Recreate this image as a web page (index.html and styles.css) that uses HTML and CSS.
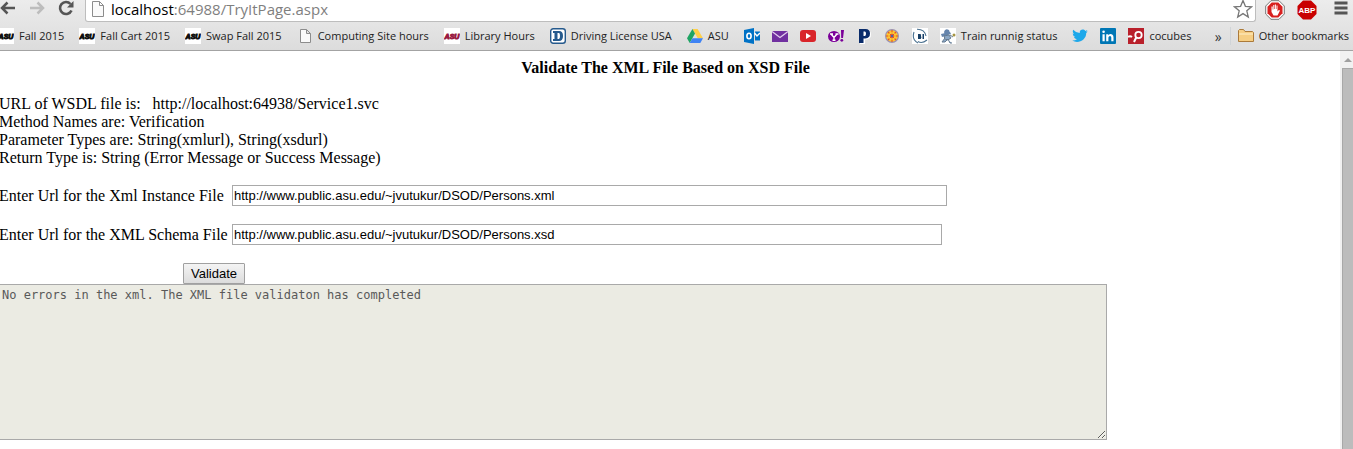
FILE: index.html
```
<!DOCTYPE html>
<html lang="en">
<head>
<meta charset="utf-8">
<title>TryItPage</title>
<link rel="stylesheet" href="styles.css">
</head>
<body>
<div class="browser">
<header class="chrome">
  <div class="toolbar">
    <nav class="nav">
      <button class="tool" aria-label="Back"><svg width="16" height="16" viewBox="0 0 16 16"><path d="M15 8H2M7.500 2.500 2 8l5.500 5.500" fill="none" stroke="#555" stroke-width="2.500"/></svg></button>
      <button class="tool" aria-label="Forward"><svg width="16" height="16" viewBox="0 0 16 16"><path d="M1 8h13M8.500 2.500 14 8l-5.500 5.500" fill="none" stroke="#bdbdbd" stroke-width="2.500"/></svg></button>
      <button class="tool" aria-label="Reload"><svg width="16" height="16" viewBox="0 0 16 16"><path d="M13.500 10.500A6 6 0 1 1 12.500 4" fill="none" stroke="#555" stroke-width="2.600"/><path d="M15.500 1v6.500H9z" fill="#555"/></svg></button>
    </nav>
    <div class="address">
      <svg class="page" width="12" height="16" viewBox="0 0 12 16"><path d="M.5.500h7l4 4v11H.5zM7.500.500v4h4" fill="#fafafa" stroke="#8c8c8c"/></svg>
      <p class="url">localhost<span class="path">:64988/TryItPage.aspx</span></p>
      <button class="tool star" aria-label="Bookmark this page"><svg width="20" height="20" viewBox="0 0 20 20"><path d="m10 1.500 2.400 5.800 6.100.500-4.700 4 1.500 6.200-5.300-3.400-5.300 3.400 1.500-6.200-4.700-4 6.100-.500z" fill="#fff" stroke="#777" stroke-width="1.300"/></svg></button>
    </div>
    <div class="extensions">
      <button class="tool" aria-label="Content blocker"><svg width="20" height="20" viewBox="0 0 20 20"><path d="M6 .700h8L19.300 6v8L14 19.300H6L.7 14V6z" fill="#fff" stroke="#777"/><path d="M6.700 2.500h6.600l4.200 4.200v6.600l-4.200 4.200H6.700l-4.200-4.200V6.700z" fill="#d8201f"/><path d="M6.500 6.500v5.500l2 3.500h4l2.500-5-1.200-.500-1.300 1.500V5.500h-1V9h-.600V4.500h-1V9h-.600V5h-1v4.500h-.600v-3z" fill="#fff"/></svg></button>
      <button class="tool" aria-label="Adblock Plus"><svg width="20" height="20" viewBox="0 0 20 20"><path d="M6 .500h8L19.500 6v8L14 19.500H6L.5 14V6z" fill="#c90000"/><text x="10" y="13" class="abp">ABP</text></svg></button>
      <button class="tool menu" aria-label="Menu"><svg width="14" height="14" viewBox="0 0 14 14"><path d="M.5 2h13M.5 7h13M.5 12h13" stroke="#555" stroke-width="3"/></svg></button>
    </div>
  </div>
  <nav class="bookmarks">
    <a href="#" class="mark"><svg width="16" height="16" viewBox="0 0 16 16"><path d="M0 0h16v16H0z" fill="#fff"/><text x="8" y="11" class="asu">ASU</text></svg><span class="name">Fall 2015</span></a>
    <a href="#" class="mark"><svg width="16" height="16" viewBox="0 0 16 16"><path d="M0 0h16v16H0z" fill="#fff"/><text x="8" y="11" class="asu">ASU</text></svg><span class="name">Fall Cart 2015</span></a>
    <a href="#" class="mark"><svg width="16" height="16" viewBox="0 0 16 16"><path d="M0 0h16v16H0z" fill="#fff"/><text x="8" y="11" class="asu">ASU</text></svg><span class="name">Swap Fall 2015</span></a>
    <a href="#" class="mark"><svg width="16" height="16" viewBox="0 0 16 16"><path d="M3.500 1.500h6l4 4v9h-10zM9.500 1.500v4h4" fill="#fafafa" stroke="#8c8c8c"/></svg><span class="name">Computing Site hours</span></a>
    <a href="#" class="mark"><svg width="16" height="16" viewBox="0 0 16 16"><path d="M0 0h16v16H0z" fill="#fff"/><text x="8" y="11" class="asu maroon">ASU</text></svg><span class="name">Library Hours</span></a>
    <a href="#" class="mark"><svg width="16" height="16" viewBox="0 0 16 16"><rect x=".7" y=".7" width="14.600" height="14.600" rx="2.500" fill="#fff" stroke="#265a8d" stroke-width="1.400"/><path d="M3 3h6q4 0 4 5t-4 5H3v-2h1.500V5H3zm4.500 2v6H9q1 0 1-3T9 5z" fill="#265a8d" fill-rule="evenodd"/></svg><span class="name">Driving License USA</span></a>
    <a href="#" class="mark"><svg width="16" height="16" viewBox="0 0 16 16"><path d="M5.400 1h5.200L16 10.200h-5.200z" fill="#ffcf48"/><path d="M5.400 1 0 10.200 2.700 15 8 5.600z" fill="#1fa463"/><path d="M5.500 10.200H16L13.300 15H2.700z" fill="#3f83f4"/></svg><span class="name">ASU</span></a>
    <a href="#" class="mark" aria-label="Outlook"><svg width="16" height="16" viewBox="0 0 16 16"><path d="M0 2 10 0v16L0 14z" fill="#0072c6"/><path d="M11 3.500h5v9h-5z" fill="#0072c6"/><path d="m10.500 5 2.500 3 3-3" fill="none" stroke="#fff" stroke-width="1.500"/><ellipse cx="5" cy="8" rx="2.100" ry="2.800" fill="none" stroke="#fff" stroke-width="1.600"/></svg></a>
    <a href="#" class="mark" aria-label="Mail"><svg width="16" height="16" viewBox="0 0 16 16"><path d="M0 3h16v11H0z" fill="#7030a0"/><path d="m0 3.500 8 6 8-6" fill="none" stroke="#e3cfee" stroke-width="1.200"/></svg></a>
    <a href="#" class="mark" aria-label="YouTube"><svg width="16" height="16" viewBox="0 0 16 16"><rect y="2" width="16" height="12" rx="3" fill="#d9252a"/><path d="m6 5 5 3-5 3z" fill="#fff"/></svg></a>
    <a href="#" class="mark" aria-label="Yahoo"><svg width="16" height="16" viewBox="0 0 16 16"><ellipse cx="6" cy="8.500" rx="6" ry="5.500" fill="#7b0099"/><path d="m3 6 3 3.500L9 6M6 9v3.500M4.500 12.300h3M2 6h3M7.500 6h3" fill="none" stroke="#fff" stroke-width="1.400"/><path d="M13 2h3l-1 8h-1.800z" fill="#7b0099"/><circle cx="13.800" cy="12.300" r="1.400" fill="#7b0099"/></svg></a>
    <a href="#" class="mark" aria-label="Pandora"><svg width="16" height="16" viewBox="0 0 16 16"><path d="M4 2h6.500Q15 2 15 6.500T10.500 11.500H9V16H4z" fill="#fff"/><path d="M3 1h6.500Q14 1 14 5.500T9.500 10.500H7.500V15H3zm4.500 2.500v4.500H9q1-.2 1-2.200T9 3.500z" fill="#0a2c6b" fill-rule="evenodd"/></svg></a>
    <a href="#" class="mark" aria-label="Wheel"><svg width="16" height="16" viewBox="0 0 16 16"><circle cx="8" cy="8" r="6.400" fill="#ffc52b" stroke="#9a91b5" stroke-width="1.200"/><path d="M8 2v12M2 8h12M4 4l8 8M12 4l-8 8" stroke="#e3532b" stroke-width="1.100"/><circle cx="8" cy="8" r="3.200" fill="none" stroke="#ffdc3c" stroke-width="1"/><circle cx="8" cy="8" r="1.200" fill="#4f62a8"/></svg></a>
    <a href="#" class="mark" aria-label="BI"><svg width="16" height="16" viewBox="0 0 16 16"><path d="M0 0h16v16H0z" fill="#fff"/><path d="M5 1.200Q12.500 1 14 8M2 4Q-.500 12 6 15M15 12Q10 16 6 13.500" fill="none" stroke="#4b7190" stroke-width="1.100"/><path d="M6 6h2.200q1.600.4.700 2 1.300 1.200-.2 3H6zm4.500 0H12v5h-1.500z" fill="#173f66"/></svg></a>
    <a href="#" class="mark"><svg width="16" height="16" viewBox="0 0 16 16"><path d="M0 0h16v16H0z" fill="#fff"/><path d="M4 4q1-4 5-2l1 3-5 2zM1 6l9-2 1 2-9 3z" fill="#6685ac"/><path d="m4 8 5-1 2 3-3 2-3-1zM10 7l3 2M5 10l-3 4h3l3-3 2 4h2" fill="#8ba7c5" stroke="#657b91"/><circle cx="14" cy="7" r="1.500" fill="#a59442"/></svg><span class="name">Train runnig status</span></a>
    <a href="#" class="mark" aria-label="Twitter"><svg width="16" height="16" viewBox="0 0 16 16"><path d="M15.800 3.500 14.200 5c.2 6.500-7.500 11.500-14 7.600q2.800.200 4.700-1.400-2.300-.400-3-2.300h1.400Q.8 8 .7 5.600l1.400.400Q0 4.200 1.200 1.700q2.600 3.100 6.600 3.300C7.200 1.500 11.500.500 13.400 2.900l2-.800-1.200 1.800z" fill="#1da8ea"/></svg></a>
    <a href="#" class="mark" aria-label="LinkedIn"><svg width="16" height="16" viewBox="0 0 16 16"><rect width="16" height="16" rx="1" fill="#0077b5"/><path d="M2.500 6.200h2.200v7H2.500zM6.200 6.200h2.100v1q2-2 4.200-.500 1 .800 1 2.800v3.700h-2.200V9.500q0-1.500-1.300-1.500T8.400 9.500v3.700H6.200z" fill="#fff"/><circle cx="3.600" cy="3.800" r="1.300" fill="#fff"/></svg></a>
    <a href="#" class="mark"><svg width="16" height="16" viewBox="0 0 16 16"><path d="M0 0h16v16H0z" fill="#b9202b"/><circle cx="10.500" cy="7" r="3.200" fill="none" stroke="#fff" stroke-width="1.800"/><path d="M8.200 9.500 6 14M0 9q2-1.500 4 0" fill="none" stroke="#fff" stroke-width="2"/></svg><span class="name">cocubes</span></a>
    <button class="more" aria-label="More bookmarks">»</button>
    <a href="#" class="mark other"><svg width="16" height="16" viewBox="0 0 16 16"><path d="M.5 13.500v-11l1-1h4l1.500 2h7.500l1 1v9z" fill="#f6ce83" stroke="#ab7a3a"/><path d="M1 6h14" stroke="#fff0c9"/></svg><span class="name">Other bookmarks</span></a>
  </nav>
</header>
<div class="viewport">
  <main class="content">
    <h1 class="title">Validate The XML File Based on XSD File</h1>
    <p class="info">URL of WSDL file is: &nbsp; http://localhost:64938/Service1.svc<br>Method Names are: Verification<br>Parameter Types are: String(xmlurl), String(xsdurl)<br>Return Type is: String (Error Message or Success Message)</p>
    <form class="form">
      <div class="field"><label class="label" for="xml">Enter Url for the Xml Instance File</label><input class="box" id="xml" type="text" value="http://www.public.asu.edu/~jvutukur/DSOD/Persons.xml"></div>
      <div class="field"><label class="label" for="xsd">Enter Url for the XML Schema File</label><input class="box schema" id="xsd" type="text" value="http://www.public.asu.edu/~jvutukur/DSOD/Persons.xsd"></div>
      <button class="validate" type="button">Validate</button>
      <textarea class="result" aria-label="Result" readonly>No errors in the xml. The XML file validaton has completed</textarea>
    </form>
  </main>
  <div class="scrollbar"><svg width="13" height="17" viewBox="0 0 13 17"><path d="m2 11 4-4 4 4z" fill="#a0a0a0"/></svg><div class="thumb"></div></div>
</div>
</div>
</body>
</html>
```
FILE: styles.css
```
* { box-sizing: border-box; }
body { margin: 0; background: #fff; color: #000; }
.browser { display: flex; flex-direction: column; height: 100vh; overflow: hidden; }
.chrome { flex: none; background: linear-gradient(#ececec, #dcdcdc); border-bottom: 1px solid #a3a3a3; font-family: "Open Sans", "Noto Sans", sans-serif; }
.tool { display: flex; padding: 0; border: 0; background: none; }
.toolbar { display: flex; height: 22px; }
.nav { display: flex; gap: 13px; width: 85px; }
.address { display: flex; flex: 1; align-items: center; gap: 7px; padding: 0 2px 3px 6px; background: #fff; border: 1px solid #bdbdbd; border-top: 0; border-radius: 0 0 3px 3px; }
.page { flex: none; }
.url { flex: 1; margin: 0; font-size: 15px; line-height: 18px; }
.path { color: #7f7f7f; }
.extensions { display: flex; gap: 12px; padding: 0 5px 0 9px; }
.extensions .tool { align-items: flex-start; }
.extensions .menu { padding: 1px 0 0 5px; }
.abp { font: bold 8px "Liberation Sans", sans-serif; fill: #fff; text-anchor: middle; }
.bookmarks { display: flex; align-items: center; gap: 12px; height: 28px; padding-right: 1px; margin-left: -2px; font-size: 11px; line-height: 18px; white-space: nowrap; }
.mark { display: flex; flex: none; align-items: center; gap: 5px; color: #222; text-decoration: none; }
.name { padding-right: 3px; }
.asu { font: italic bold 7px "Liberation Sans", sans-serif; fill: #111; stroke: #111; stroke-width: 1px; text-anchor: middle; }
.maroon { fill: #991b42; stroke: #991b42; }
.more { margin: 0 -4px 0 auto; padding: 0; border: 0; background: none; color: #333; font: 14px "Open Sans", sans-serif; }
.other { padding-left: 7px; border-left: 1px solid #d0d4d8; }
.viewport { display: flex; flex: 1; min-height: 0; }
.content { flex: 1; min-width: 0; margin-left: -1px; padding: 8px 8px 0 0; font: 16px/18px "Liberation Serif", serif; }
.title { margin: 0 0 18px; font-size: 16px; line-height: 18px; text-align: center; }
.info { margin: 0 0 18px; }
.form { display: flex; flex-direction: column; align-items: flex-start; }
.field { display: flex; align-items: center; width: 100%; margin-bottom: 18px; }
.label { flex: none; width: 233px; }
.box { width: 715px; height: 21px; padding: 1px; border: 1px solid #a9a9a9; background: #fff; font: 13px "Liberation Sans", sans-serif; }
.schema { width: 710px; }
.validate { height: 21px; margin-left: 184px; padding: 0 7px; border: 1px solid #a0a0a0; border-radius: 1px; background: linear-gradient(#f4f4f4, #dcdcdc); font: 13px "Liberation Sans", sans-serif; }
.result { width: 1108px; max-width: 100%; height: 156px; padding: 2px; border: 1px solid #a9a9a9; background: #ebebe3; color: #595959; font: 12px/16px "DejaVu Sans Mono", monospace; resize: both; }
.scrollbar { display: flex; flex-direction: column; flex: none; width: 13px; padding-left: 2px; background: #f1f1f1; }
.thumb { flex: 1; background: #bcbcbc; border: 1px solid #a8a8a8; border-width: 1px 0 0 1px; }
```
